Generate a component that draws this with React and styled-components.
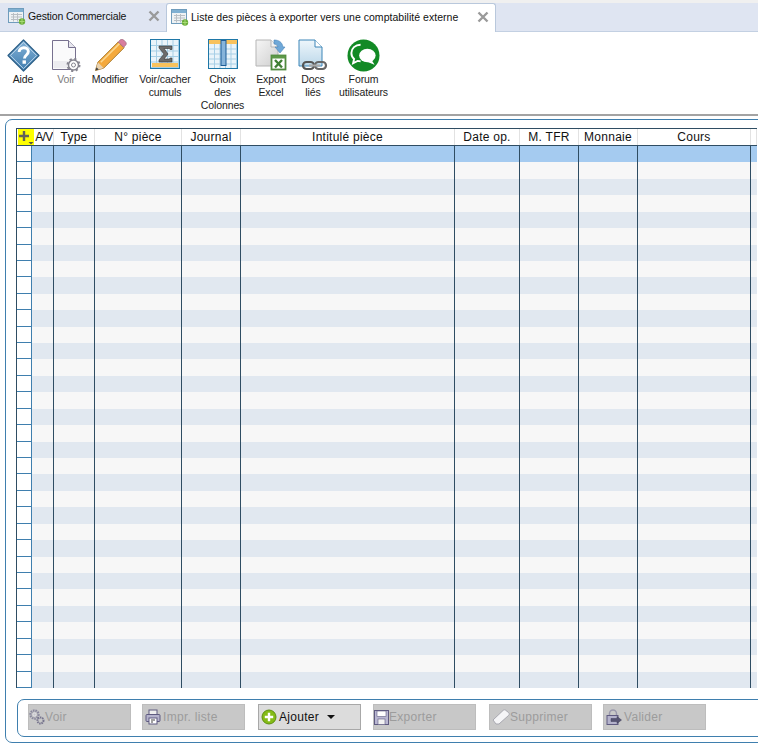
import React from "react";
import styled, { createGlobalStyle } from "styled-components";

const Global = createGlobalStyle`
  html, body { margin: 0; padding: 0; background: #fff; }
  body { width: 758px; height: 744px; overflow: hidden; font-family: "Liberation Sans", Arial, sans-serif; }
  * { box-sizing: border-box; }
`;

const Page = styled.div`
  width: 758px;
  height: 744px;
  display: flex;
  flex-direction: column;
  background: #fff;
  overflow: hidden;
`;

const TabStrip = styled.div`
  height: 32px;
  flex: none;
  display: flex;
  align-items: flex-end;
  background: linear-gradient(#f0f0f0 0 3px, #dfe5f2 3px);
  border-bottom: 1px solid #c3d0e2;
`;

const Tab = styled.div`
  width: ${(p) => p.$w}px;
  height: ${(p) => (p.$active ? 29 : 28)}px;
  margin-bottom: ${(p) => (p.$active ? -1 : 0)}px;
  display: flex;
  align-items: center;
  padding: 0 6px 2px ${(p) => (p.$active ? 4 : 8)}px;
  gap: 2px;
  background: ${(p) => (p.$active ? "#fff" : "transparent")};
  border-top: ${(p) => (p.$active ? "1px solid #b9c8dc" : "none")};
  border-left: ${(p) => (p.$active ? "1px solid #b9c8dc" : "none")};
  border-right: ${(p) => (p.$active ? "1px solid #b9c8dc" : "none")};
  border-top-left-radius: ${(p) => (p.$active ? 3 : 0)}px;
  border-top-right-radius: ${(p) => (p.$active ? 3 : 0)}px;
`;

const TabLabel = styled.span`
  flex: 1;
  font-size: 10.5px;
  color: #111;
  white-space: nowrap;
  letter-spacing: ${(p) => p.$ls}px;
`;

const Toolbar = styled.div`
  height: 84px;
  flex: none;
  display: flex;
  padding: 7px 0 0 3px;
  border-bottom: 2px solid #a3a3a3;
`;

const Tool = styled.div`
  width: ${(p) => p.$w}px;
  display: flex;
  flex-direction: column;
  align-items: center;
`;

const ToolIcon = styled.div`
  width: 34px;
  height: 34px;
  display: flex;
  align-items: flex-start;
  justify-content: center;
  svg { display: block; }
`;

const ToolLabel = styled.div`
  font-size: 10.5px;
  line-height: 13px;
  text-align: center;
  white-space: pre;
  letter-spacing: -0.1px;
  color: ${(p) => (p.$off ? "#7d7d7d" : "#1c1c1c")};
`;

const Frame = styled.div`
  flex: none;
  height: 624px;
  margin: 3px -8px 0 5px;
  padding: 8px 0 4px 10px;
  border: 1px solid #3f7fae;
  border-radius: 7px;
  display: flex;
  flex-direction: column;
`;

const Table = styled.div`
  height: 560px;
  flex: none;
  display: flex;
  flex-direction: column;
  border-top: 1px solid #2f4d63;
  border-left: 1px solid #2f4d63;
  margin-right: 8px;
`;

const cols = "15px 22px 41px 87px 59px 214px 65px 59px 59px 113px 1fr";

const HeadRow = styled.div`
  height: 17px;
  flex: none;
  display: grid;
  grid-template-columns: ${cols};
  border-bottom: 1px solid #2f4d63;
`;

const HeadCell = styled.div`
  font-size: 12px;
  line-height: 16px;
  letter-spacing: ${(p) => p.$ls ?? 0.25}px;
  padding-left: ${(p) => p.$pl ?? 0}px;
  color: #111;
  text-align: center;
  white-space: nowrap;
  overflow: hidden;
  border-right: 1px solid #e2e2e2;
`;

const Corner = styled.div`
  position: relative;
  z-index: 1;
  width: 16px;
  height: 16px;
  background: #ffff00;
  margin-left: 1px;
`;

const Row = styled.div`
  flex: 1;
  min-height: 0;
  display: grid;
  grid-template-columns: ${cols};
  background: ${(p) => p.$bg};
`;

const RowHead = styled.div`
  background: #fff;
  border-right: 1px solid #3f7fae;
  border-bottom: 1px solid #3f7fae;
`;

const Cell = styled.div`
  border-right: 1px solid #2f4d63;
  &:last-child { border-right: none; }
`;

const BottomBar = styled.div`
  flex: none;
  height: 38px;
  margin: 11px 0 0 1px;
  padding: 4px 0 0 10px;
  display: flex;
  border: 1px solid #3f7fae;
  border-radius: 7px;
`;

const Btn = styled.div`
  width: 103px;
  height: 26px;
  margin-right: ${(p) => p.$mr}px;
  padding-left: ${(p) => p.$pl ?? 0}px;
  display: flex;
  align-items: center;
  gap: ${(p) => p.$gap ?? 0}px;
  background: ${(p) => (p.$on ? "#dcdcdc" : "#c8c8c8")};
  border: 1px solid ${(p) => (p.$on ? "#a8a8a8" : "#bdbdbd")};
  font-size: 12px;
  letter-spacing: 0.3px;
  color: ${(p) => (p.$on ? "#111" : "#9c9c9c")};
  white-space: nowrap;
`;

const Caret = styled.span`
  width: 0;
  height: 0;
  margin-left: 6px;
  border-left: 4px solid transparent;
  border-right: 4px solid transparent;
  border-top: 4px solid #111;
`;

/* ---------- icons ---------- */
const TabIcon = () => (
  <svg width="18" height="18" viewBox="0 0 18 18">
    <rect x=".5" y="1.500" width="15" height="14" fill="#eef2f4" stroke="#6f9cbc" />
    <rect x="1" y="2" width="14" height="3" fill="#7fb0d2" />
    <path d="M3 7.500h11M3 10h11M3 12.500h11M5.500 6v8.500M9.500 6v8.500" stroke="#b9bfc4" strokeWidth="1" fill="none" />
    <circle cx="14" cy="14.500" r="3.200" fill="#6cae3a" />
    <path d="M14 12v5M11.500 14.500h5" stroke="#a7db74" strokeWidth="1" />
  </svg>
);

const CloseX = () => (
  <svg width="12" height="12" viewBox="0 0 12 12">
    <path d="M1.500 1.500l9 9M10.500 1.500l-9 9" stroke="#9a9a9a" strokeWidth="2.400" />
  </svg>
);

const HelpIcon = () => (
  <svg width="33" height="33" viewBox="0 0 34 34">
    <defs>
      <linearGradient id="hg" x1="0" y1="0" x2="0" y2="1">
        <stop offset="0" stopColor="#86b3d8" />
        <stop offset="1" stopColor="#3e7cae" />
      </linearGradient>
    </defs>
    <path d="M17 1L33 17 17 33 1 17Z" fill="url(#hg)" stroke="#2b5f88" strokeWidth="1.200" strokeLinejoin="round" />
    <path d="M17 3.500L30.500 17 17 30.500 3.500 17Z" fill="none" stroke="#bcd6ea" strokeWidth="1" />
    <path d="M12.500 13.500c0-6 9.500-6 9.500-.500 0 3.500-4 3.500-4 7" fill="none" stroke="#fff" strokeWidth="3" />
    <rect x="16" y="22" width="3.500" height="3.500" fill="#fff" />
  </svg>
);

const DocGearIcon = () => (
  <svg width="34" height="34" viewBox="0 0 34 34">
    <path d="M3.500 1.500h16l7 7v15h-4v7H3.500Z" fill="#fafafb" stroke="#77718f" strokeWidth="1" />
    <path d="M19.500 1.500v7h7" fill="#e7e7ee" stroke="#77718f" />
    <rect x="4.500" y="22" width="18" height="7" fill="#ececf0" />
    <g transform="translate(24.500 26)">
      <circle r="5" fill="#fff" stroke="#85848f" strokeWidth="1.500" />
      <circle r="2" fill="#fff" stroke="#85848f" />
      <circle r="6.100" fill="none" stroke="#85848f" strokeWidth="1.800" strokeDasharray="2.200 2.600" />
    </g>
  </svg>
);

const PencilIcon = () => (
  <svg width="33" height="33" viewBox="0 0 34 34">
    <path d="M1.500 32.500L4 24 25 3l6 6L10 30Z" fill="#f4a93c" stroke="#a87a2c" strokeWidth="1" strokeLinejoin="round" />
    <path d="M7 24L27 4" stroke="#fbd992" strokeWidth="1.500" />
    <path d="M1.500 32.500L4 24l6 6Z" fill="#e9d3b0" />
    <path d="M1.500 32.500l1-3.500 2.500 2.500Z" fill="#444" />
    <path d="M25 3l2-2c1-1 2.500-1 3.500 0l2 2c1 1 1 2.500 0 3.500l-2 2Z" fill="#d87d9e" stroke="#9c6b80" strokeWidth=".8" />
  </svg>
);

const Grid = ({ x, y, w, h, dx, dy }) => {
  const d = [];
  for (let i = x + dx; i < x + w; i += dx) d.push(`M${i} ${y}v${h}`);
  for (let j = y + dy; j < y + h; j += dy) d.push(`M${x} ${j}h${w}`);
  return <path d={d.join("")} stroke="#a7cfe6" strokeWidth="1" fill="none" />;
};

const SumIcon = () => (
  <svg width="30" height="30" viewBox="0 0 30 30">
    <rect x=".5" y=".5" width="29" height="29" fill="#eaf4fa" stroke="#1f77a7" strokeWidth="1" />
    <Grid x={1} y={1} w={28} h={28} dx={5.500} dy={5.500} />
    <rect x="2" y="24" width="26" height="4" fill="#f8c25d" />
    <path d="M9 7h13v3.500h-2l-.5-1H14l4 5.500-4 5h5.500l.5-1h2V23H9v-2l5-6-5-6Z" fill="#6c6c6c" stroke="#333" strokeWidth=".6" />
  </svg>
);

const ColumnsIcon = () => (
  <svg width="30" height="30" viewBox="0 0 30 30">
    <rect x=".5" y=".5" width="29" height="29" fill="#eaf4fa" stroke="#1f77a7" strokeWidth="1" />
    <rect x="1" y="1" width="28" height="4" fill="#f8c25d" />
    <Grid x={1} y={5} w={28} h={24} dx={5.500} dy={5} />
    <rect x="13" y="1.500" width="5" height="25" fill="#87b4da" stroke="#1d5d97" strokeWidth="1" />
  </svg>
);

const ExcelIcon = () => (
  <svg width="34" height="34" viewBox="0 0 34 34">
    <defs>
      <linearGradient id="xg" x1="0" y1="0" x2="1" y2="1">
        <stop offset="0" stopColor="#f6f6f6" />
        <stop offset="1" stopColor="#cfcfcf" />
      </linearGradient>
    </defs>
    <path d="M2 1h15l7 7v19H2Z" fill="url(#xg)" stroke="#b5b5b5" />
    <path d="M17 1v7h7" fill="#f2f2f2" stroke="#b5b5b5" />
    <path d="M20 1c5 0 8 2 9 7h2l-5 6-5-6h3c-.5-2-2-3-4-3Z" fill="#6fa8d8" stroke="#4a85b8" strokeWidth=".6" />
    <rect x="17.500" y="16.500" width="14" height="14" fill="#fff" stroke="#4f8a3d" strokeWidth="1.800" />
    <rect x="17.500" y="16.500" width="14" height="3" fill="#5d9848" />
    <path d="M21 21l7 7.500M28 21l-7 7.500" stroke="#3f7f33" strokeWidth="2.400" />
  </svg>
);

const LinkIcon = () => (
  <svg width="30" height="32" viewBox="0 0 30 32">
    <defs>
      <linearGradient id="lg" x1="0" y1="0" x2="0" y2="1">
        <stop offset="0" stopColor="#eef6fb" />
        <stop offset="1" stopColor="#bcd8ea" />
      </linearGradient>
    </defs>
    <path d="M1 1h16l7 7v19H1Z" fill="url(#lg)" stroke="#3d86b8" />
    <path d="M17 1v7h7" fill="#fff" stroke="#3d86b8" />
    <rect x="5" y="23" width="11" height="7" rx="3.500" fill="none" stroke="#555" strokeWidth="2.200" />
    <rect x="17" y="23" width="11" height="7" rx="3.500" fill="none" stroke="#666" strokeWidth="2.200" />
    <path d="M11 26.500h11" stroke="#aaa" strokeWidth="2" />
  </svg>
);

const ForumIcon = () => (
  <svg width="33" height="33" viewBox="0 0 34 34">
    <circle cx="17" cy="17" r="16.500" fill="#128a25" />
    <path d="M14 6C8.500 6 4.500 9.500 4.500 14.500c0 2.500 1 4.500 2.800 6l-1 4.500 4.600-2.400c1 .3 2 .4 3.100.4" fill="none" stroke="#fff" strokeWidth="2" />
    <ellipse cx="21" cy="17" rx="8.500" ry="7" fill="#fff" />
    <path d="M25 21l3.500 5.500-8-3Z" fill="#fff" />
  </svg>
);

const GearsBtn = () => (
  <svg width="16" height="16" viewBox="0 0 16 16">
    <g fill="none">
      <circle cx="5.500" cy="5.500" r="4" stroke="#8a889e" strokeDasharray="1.600 .8" strokeWidth="2.400" />
      <circle cx="5.500" cy="5.500" r="1.500" stroke="#e2e1ea" strokeWidth="1" />
      <circle cx="11.500" cy="11.500" r="3" stroke="#77758e" strokeDasharray="1.500 .7" strokeWidth="2" />
    </g>
  </svg>
);

const PrinterBtn = () => (
  <svg width="16" height="16" viewBox="0 0 16 16">
    <rect x="4" y="1" width="8" height="5" fill="#eee" stroke="#5e5a80" />
    <rect x="1" y="5.500" width="14" height="7" rx="1" fill="#b4b2cc" stroke="#5e5a80" />
    <rect x="4" y="9" width="8" height="6" fill="#fff" stroke="#5e5a80" />
    <path d="M6 11h4M6 13h2" stroke="#444" />
  </svg>
);

const PlusBtn = () => (
  <svg width="16" height="16" viewBox="0 0 16 16">
    <circle cx="8" cy="8" r="7" fill="#84bb16" stroke="#5d8f10" />
    <path d="M8 3.800v8.400M3.800 8h8.400" stroke="#fff" strokeWidth="2.400" />
  </svg>
);

const SaveBtn = () => (
  <svg width="15" height="15" viewBox="0 0 15 15">
    <rect x=".5" y=".5" width="14" height="14" fill="#b9b7d2" stroke="#5e5a80" />
    <rect x="3" y="1" width="9" height="5.500" fill="#fff" stroke="#5e5a80" strokeWidth=".6" />
    <rect x="4" y="9" width="7" height="5.500" fill="#f2f2f2" stroke="#5e5a80" strokeWidth=".6" />
  </svg>
);

const EraserBtn = () => (
  <svg width="18" height="16" viewBox="0 0 18 16">
    <path d="M1 11L11 1.500c1-1 2-1 3 0l2.500 2c1 1 1 2 0 3L7 15H4Z" fill="#f5f5f7" stroke="#a8a8b0" />
  </svg>
);

const LockBtn = () => (
  <svg width="16" height="16" viewBox="0 0 16 16">
    <path d="M3.500 7V4.500a3.500 3.500 0 0 1 7 0V7" fill="none" stroke="#9a98ac" strokeWidth="1.500" />
    <rect x="1" y="6.500" width="11" height="9" fill="#b4b2cc" stroke="#5e5a80" />
    <path d="M5 9.500h6V7.500l4.500 3.500-4.500 3.500v-2H5Z" fill="#555372" stroke="#3e3c58" strokeWidth=".5" />
  </svg>
);

const CornerIcon = () => (
  <svg width="16" height="16" viewBox="0 0 16 16" style={{ display: "block" }}>
    <path d="M6 2v10M1 7h10" stroke="#62625a" strokeWidth="2.400" />
    <path d="M10.500 13h5l-2.500 2.500Z" fill="#55553f" />
  </svg>
);

const tools = [
  { w: 40, label: "Aide", icon: <HelpIcon /> },
  { w: 46, label: "Voir", icon: <DocGearIcon />, off: true },
  { w: 42, label: "Modifier", icon: <PencilIcon /> },
  { w: 68, label: "Voir/cacher\ncumuls", icon: <SumIcon /> },
  { w: 47, label: "Choix\ndes\nColonnes", icon: <ColumnsIcon /> },
  { w: 50, label: "Export\nExcel", icon: <ExcelIcon /> },
  { w: 34, label: "Docs\nliés", icon: <LinkIcon /> },
  { w: 67, label: "Forum\nutilisateurs", icon: <ForumIcon /> },
];

const heads = [
  { t: "A/V", ls: -0.6, pl: 3 },
  { t: "Type" },
  { t: "N° pièce" },
  { t: "Journal" },
  { t: "Intitulé pièce" },
  { t: "Date op." },
  { t: "M. TFR" },
  { t: "Monnaie" },
  { t: "Cours" },
  { t: "" },
];

const rowColor = (i) => (i === 0 ? "#a5cbf0" : i % 2 ? "#f7f7f7" : "#e1e8f0");

export default function App() {
  return (
    <Page>
      <Global />
      <TabStrip>
        <Tab $w={166}>
          <TabIcon />
          <TabLabel $ls={-0.14}>Gestion Commerciale</TabLabel>
          <CloseX />
        </Tab>
        <Tab $w={330} $active>
          <TabIcon />
          <TabLabel $ls={0.03}>Liste des pièces à exporter vers une comptabilité externe</TabLabel>
          <CloseX />
        </Tab>
      </TabStrip>
      <Toolbar>
        {tools.map((t) => (
          <Tool key={t.label} $w={t.w}>
            <ToolIcon>{t.icon}</ToolIcon>
            <ToolLabel $off={t.off}>{t.label}</ToolLabel>
          </Tool>
        ))}
      </Toolbar>
      <Frame>
        <Table>
          <HeadRow>
            <Corner><CornerIcon /></Corner>
            {heads.map((h, i) => (
              <HeadCell key={i} $ls={h.ls} $pl={h.pl}>{h.t}</HeadCell>
            ))}
          </HeadRow>
          {Array.from({ length: 33 }, (_, i) => (
            <Row key={i} $bg={rowColor(i)}>
              <RowHead />
              {heads.map((_, j) => (
                <Cell key={j} />
              ))}
            </Row>
          ))}
        </Table>
        <BottomBar>
          <Btn $mr={11}><GearsBtn />Voir</Btn>
          <Btn $mr={13} $pl={2} $gap={2}><PrinterBtn />Impr. liste</Btn>
          <Btn $mr={12} $pl={2} $on $gap={2}><PlusBtn />Ajouter<Caret /></Btn>
          <Btn $mr={13}><SaveBtn />Exporter</Btn>
          <Btn $mr={11} $pl={2}><EraserBtn />Supprimer</Btn>
          <Btn $mr={0} $pl={2} $gap={2}><LockBtn />Valider</Btn>
        </BottomBar>
      </Frame>
    </Page>
  );
}
